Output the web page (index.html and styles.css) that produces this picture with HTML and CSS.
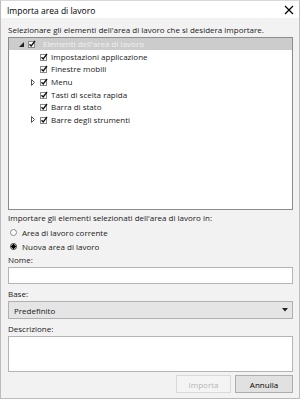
FILE: index.html
```html
<!DOCTYPE html>
<html>
<head>
<meta charset="utf-8">
<link rel="stylesheet" href="styles.css">
</head>
<body>
<div class="window">
  <div class="titlebar">
    <span class="title">Importa area di lavoro</span>
    <svg class="close" width="10" height="10" viewBox="0 0 10 10"><path d="M1 1L9 9M9 1L1 9" stroke="#000" stroke-width="1.2" fill="none"/></svg>
  </div>
  <div class="content">
    <div class="label prompt">Selezionare gli elementi dell'area di lavoro che si desidera importare.</div>
    <div class="tree">
      <div class="row header">
        <span class="exp"><svg width="5" height="5" viewBox="0 0 5 5"><path d="M5 0V5H0Z" fill="#222"/></svg></span>
        <span class="cb"><svg width="8" height="8" viewBox="0 0 8 8"><rect x="0.5" y="1.5" width="6" height="6" fill="#fff" stroke="#8a8a8a"/><path d="M1.5 4.2L3.2 6L7 1" stroke="#111" stroke-width="1.3" fill="none"/></svg></span>
        <span class="txt">Elementi dell'area di lavoro</span>
      </div>
      <div class="row lvl2">
        <span class="exp"></span>
        <span class="cb"><svg width="8" height="8" viewBox="0 0 8 8"><rect x="0.5" y="1.5" width="6" height="6" fill="#fff" stroke="#8a8a8a"/><path d="M1.5 4.2L3.2 6L7 1" stroke="#111" stroke-width="1.3" fill="none"/></svg></span>
        <span class="txt">Impostazioni applicazione</span>
      </div>
      <div class="row lvl2">
        <span class="exp"></span>
        <span class="cb"><svg width="8" height="8" viewBox="0 0 8 8"><rect x="0.5" y="1.5" width="6" height="6" fill="#fff" stroke="#8a8a8a"/><path d="M1.5 4.2L3.2 6L7 1" stroke="#111" stroke-width="1.3" fill="none"/></svg></span>
        <span class="txt">Finestre mobili</span>
      </div>
      <div class="row lvl2">
        <span class="exp"><svg width="4" height="7" viewBox="0 0 4 7"><path d="M0.5 0.5L3.5 3.5L0.5 6.5Z" fill="#fff" stroke="#555"/></svg></span>
        <span class="cb"><svg width="8" height="8" viewBox="0 0 8 8"><rect x="0.5" y="1.5" width="6" height="6" fill="#fff" stroke="#8a8a8a"/><path d="M1.5 4.2L3.2 6L7 1" stroke="#111" stroke-width="1.3" fill="none"/></svg></span>
        <span class="txt">Menu</span>
      </div>
      <div class="row lvl2">
        <span class="exp"></span>
        <span class="cb"><svg width="8" height="8" viewBox="0 0 8 8"><rect x="0.5" y="1.5" width="6" height="6" fill="#fff" stroke="#8a8a8a"/><path d="M1.5 4.2L3.2 6L7 1" stroke="#111" stroke-width="1.3" fill="none"/></svg></span>
        <span class="txt">Tasti di scelta rapida</span>
      </div>
      <div class="row lvl2">
        <span class="exp"></span>
        <span class="cb"><svg width="8" height="8" viewBox="0 0 8 8"><rect x="0.5" y="1.5" width="6" height="6" fill="#fff" stroke="#8a8a8a"/><path d="M1.5 4.2L3.2 6L7 1" stroke="#111" stroke-width="1.3" fill="none"/></svg></span>
        <span class="txt">Barra di stato</span>
      </div>
      <div class="row lvl2">
        <span class="exp"><svg width="4" height="7" viewBox="0 0 4 7"><path d="M0.5 0.5L3.5 3.5L0.5 6.5Z" fill="#fff" stroke="#555"/></svg></span>
        <span class="cb"><svg width="8" height="8" viewBox="0 0 8 8"><rect x="0.5" y="1.5" width="6" height="6" fill="#fff" stroke="#8a8a8a"/><path d="M1.5 4.2L3.2 6L7 1" stroke="#111" stroke-width="1.3" fill="none"/></svg></span>
        <span class="txt">Barre degli strumenti</span>
      </div>
    </div>
    <div class="label sect">Importare gli elementi selezionati dell'area di lavoro in:</div>
    <div class="radio"><span class="rb"></span>Area di lavoro corrente</div>
    <div class="radio"><span class="rb on"></span>Nuova area di lavoro</div>
    <div class="label">Nome:</div>
    <div class="input"></div>
    <div class="label base">Base:</div>
    <div class="select"><span>Predefinito</span><svg width="6" height="4" viewBox="0 0 6 4"><path d="M0 0H6L3 3.5Z" fill="#222"/></svg></div>
    <div class="label">Descrizione:</div>
    <div class="textarea"></div>
    <div class="buttons">
      <div class="btn disabled">Importa</div>
      <div class="btn">Annulla</div>
    </div>
  </div>
</div>
</body>
</html>
```

FILE: styles.css
```css
html, body {
  margin: 0;
  padding: 0;
  background: #fff;
}
body {
  font-family: "Open Sans", "Noto Sans", sans-serif;
  font-size: 8px;
  color: #1a1a1a;
}
.window {
  width: 298px;
  height: 397px;
  border: 1px solid #bcbcbc;
  border-top-color: #d8d8d8;
  background: #f2f2f2;
  display: flex;
  flex-direction: column;
}
.titlebar {
  height: 17px;
  background: #fff;
  display: flex;
  align-items: center;
  justify-content: space-between;
  padding: 0 5px 0 6px;
  flex: none;
}
.title {
  font-size: 8.5px;
  color: #000;
  padding-top: 1px;
}
.close {
  display: block;
  margin-top: 1px;
}
.content {
  padding: 5px 6px 0 7px;
  display: flex;
  flex-direction: column;
}
.label {
  height: 13px;
  line-height: 13px;
  white-space: nowrap;
}
.prompt {
  height: 14px;
  line-height: 13px;
}
.tree {
  height: 171px;
  border: 1px solid #8c8c8c;
  background: #fff;
  margin-bottom: 1px;
}
.row {
  height: 12.6px;
  display: flex;
  align-items: center;
  white-space: nowrap;
}
.row.header {
  background: #cccccc;
  height: 12px;
  margin-bottom: 0.6px;
}
.row.header .txt {
  color: #f0f0f0;
  margin-left: 4px;
}
.exp {
  width: 9px;
  display: flex;
  align-items: center;
  flex: none;
}
.exp svg { display: block; }
.cb {
  width: 11px;
  flex: none;
  display: flex;
  align-items: center;
}
.cb svg { display: block; }
.header .exp { margin-left: 10px; }
.lvl2 .exp { margin-left: 22px; }
.txt { line-height: 12px; }
.sect {
  height: 14px;
  line-height: 14px;
}
.radio {
  height: 14px;
  display: flex;
  align-items: center;
  white-space: nowrap;
}
.rb {
  width: 7px;
  height: 7px;
  border: 1px solid #8a8a8a;
  border-radius: 50%;
  background: #fff;
  margin: 0 5px 0 2px;
  box-sizing: border-box;
  flex: none;
}
.rb.on {
  border-color: #333;
  background: radial-gradient(circle, #000 0 2px, #fff 2.3px);
}
.input {
  height: 15px;
  border: 1px solid #b4b4b4;
  background: #fff;
  margin: 1px 0 3px;
}
.select {
  height: 16px;
  border: 1px solid #b0b0b0;
  background: #e5e5e5;
  display: flex;
  align-items: center;
  justify-content: space-between;
  padding: 0 4px 0 5px;
  margin: 1px 0 3px;
}
.select svg { display: block; }
.textarea {
  height: 34px;
  border: 1px solid #b4b4b4;
  background: #fff;
  margin-top: 1px;
}
.buttons {
  display: flex;
  justify-content: flex-end;
  gap: 4px;
  margin-top: 3px;
}
.btn {
  height: 16px;
  border: 1px solid #adadad;
  background: #e1e1e1;
  display: flex;
  align-items: center;
  justify-content: center;
  color: #000;
}
.btn.disabled {
  width: 53px;
  border-color: #d9d9d9;
  background: #f4f4f4;
  color: #b5b5b5;
}
.btn:last-child { width: 56px; }
```
